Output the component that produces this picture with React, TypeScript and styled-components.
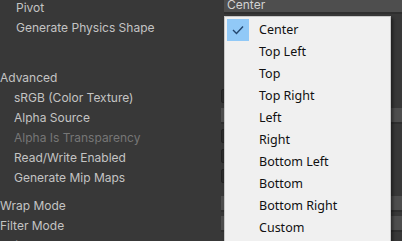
import React from "react";
import styled, { createGlobalStyle } from "styled-components";

const Global = createGlobalStyle`
  html, body { margin: 0; padding: 0; background: #383838; overflow: hidden; }
  body { width: 402px; height: 241px; font-family: Inter, "Liberation Sans", sans-serif; }
`;

const Inspector = styled.div`
  position: relative;
  width: 402px;
  height: 241px;
  overflow: hidden;
  background: #383838;
  display: flex;
  flex-direction: column;
  padding-top: 0;
  box-sizing: border-box;
`;

const Rows = styled.div<{ $top?: number }>`
  display: flex;
  flex-direction: column;
  margin-top: ${(p) => p.$top ?? 0}px;
`;

const Row = styled.div`
  display: grid;
  grid-template-columns: 221px 1fr;
  height: 20px;
  flex-shrink: 0;
`;

const Label = styled.div<{ $indent: number; $disabled?: boolean }>`
  padding-left: ${(p) => p.$indent}px;
  font-size: 12px;
  line-height: 20px;
  color: ${(p) => (p.$disabled ? "#767676" : "#c4c4c4")};
  white-space: nowrap;
`;

const Field = styled.div<{ $offset?: number }>`
  margin-left: ${(p) => p.$offset ?? 0}px;
  height: 16px;
  box-sizing: border-box;
  background: #4e4e4e;
  border-bottom: 2px solid #2f2f2f;
  font-size: 12px;
  line-height: 13px;
  color: #d2d2d2;
  padding-left: 3px;
  display: flex;
  align-items: flex-end;
  padding-bottom: 1px;
`;

const Toggle = styled.div`
  margin-top: 1px;
  width: 14px;
  height: 14px;
  box-sizing: border-box;
  background: #2b2b2b;
  border: 1px solid #222;
  border-radius: 2px;
`;

const Menu = styled.div`
  position: absolute;
  left: 224px;
  top: 16px;
  width: 167px;
  height: 240px;
  box-sizing: border-box;
  background: #f0f0f0;
  border: 1px solid #c8c8c8;
  box-shadow: 2px 2px 3px rgba(0, 0, 0, 0.45);
  padding: 2px;
  display: flex;
  flex-direction: column;
  font-family: "Noto Sans", "Open Sans", sans-serif;
`;

const Item = styled.div`
  display: grid;
  grid-template-columns: 22px 1fr;
  column-gap: 10px;
  height: 22px;
  align-items: center;
  font-size: 12.5px;
  line-height: 20px;
  color: #111;
`;

const Check = styled.div<{ $on: boolean }>`
  width: 22px;
  height: 22px;
  background: ${(p) => (p.$on ? "#91c9f7" : "transparent")};
  display: flex;
  align-items: center;
  justify-content: center;
`;

const ItemText = styled.span`
  padding-bottom: 1px;
`;

const items = [
  "Center",
  "Top Left",
  "Top",
  "Top Right",
  "Left",
  "Right",
  "Bottom Left",
  "Bottom",
  "Bottom Right",
  "Custom",
];

export default function App() {
  return (
    <>
      <Global />
      <Inspector>
        <Rows $top={-2}>
          <Row>
            <Label $indent={16}>Pivot</Label>
            <Field $offset={3}>Center</Field>
          </Row>
          <Row>
            <Label $indent={16}>Generate Physics Shape</Label>
            <div />
          </Row>
        </Rows>
        <Rows $top={30}>
          <Row>
            <Label $indent={-3}>Advanced</Label>
            <div />
          </Row>
          <Row>
            <Label $indent={14}>sRGB (Color Texture)</Label>
            <Toggle />
          </Row>
          <Row>
            <Label $indent={14}>Alpha Source</Label>
            <Field />
          </Row>
          <Row>
            <Label $indent={14} $disabled>
              Alpha Is Transparency
            </Label>
            <Toggle />
          </Row>
          <Row>
            <Label $indent={14}>Read/Write Enabled</Label>
            <Toggle />
          </Row>
          <Row>
            <Label $indent={14}>Generate Mip Maps</Label>
            <Toggle />
          </Row>
        </Rows>
        <Rows $top={8}>
          <Row>
            <Label $indent={-3}>Wrap Mode</Label>
            <Field />
          </Row>
          <Row>
            <Label $indent={-1}>Filter Mode</Label>
            <Field />
          </Row>
          <Row>
            <Label $indent={-1}>Aniso Level</Label>
            <div />
          </Row>
        </Rows>
        <Menu>
          {items.map((t, i) => (
            <Item key={t}>
              <Check $on={i === 0}>
                {i === 0 && (
                  <svg width="22" height="22" viewBox="0 0 22 22">
                    <polyline
                      points="6,11 9.5,14.5 16,7.5"
                      fill="none"
                      stroke="#23466e"
                      strokeWidth="1.4"
                    />
                  </svg>
                )}
              </Check>
              <ItemText>{t}</ItemText>
            </Item>
          ))}
        </Menu>
      </Inspector>
    </>
  );
}
